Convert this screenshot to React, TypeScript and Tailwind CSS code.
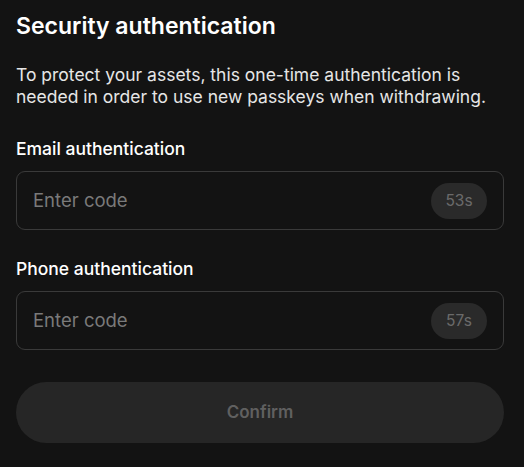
export default function App() {
  return (
    <div className="min-h-screen w-full bg-[#131313] text-white" style={{ fontFamily: "Inter, 'Noto Sans', sans-serif" }}>
      <div className="pl-4 pr-5 pt-[11px] pb-6 flex flex-col">
        <h1 className="text-[23px] leading-[30px] font-semibold">Security authentication</h1>
        <p className="mt-[23px] text-[17.5px] leading-[22px] text-[#e6e6e6]">
          To protect your assets, this one-time authentication is needed in order to use new passkeys when withdrawing.
        </p>

        <label className="mt-[30px] text-[17.5px] leading-[22px] font-medium">Email authentication</label>
        <div className="mt-[11px] h-[59px] rounded-[9px] border border-[#3a3a3a] flex items-center pl-4 pr-[16px]">
          <span className="flex-1 text-[18.5px] text-[#7a7a7a]">Enter code</span>
          <span className="h-[36px] w-[56px] rounded-full bg-[#2a2a2a] flex items-center justify-center text-[15.5px] text-[#6a6a6a]">53s</span>
        </div>

        <label className="mt-[28px] text-[17.5px] leading-[22px] font-medium">Phone authentication</label>
        <div className="mt-[11px] h-[59px] rounded-[9px] border border-[#3a3a3a] flex items-center pl-4 pr-[16px]">
          <span className="flex-1 text-[18.5px] text-[#7a7a7a]">Enter code</span>
          <span className="h-[36px] w-[56px] rounded-full bg-[#2a2a2a] flex items-center justify-center text-[15.5px] text-[#6a6a6a]">57s</span>
        </div>

        <button className="mt-[32px] h-[61px] rounded-full bg-[#262626] text-[17px] font-semibold text-[#606060]">
          Confirm
        </button>
      </div>
    </div>
  );
}
